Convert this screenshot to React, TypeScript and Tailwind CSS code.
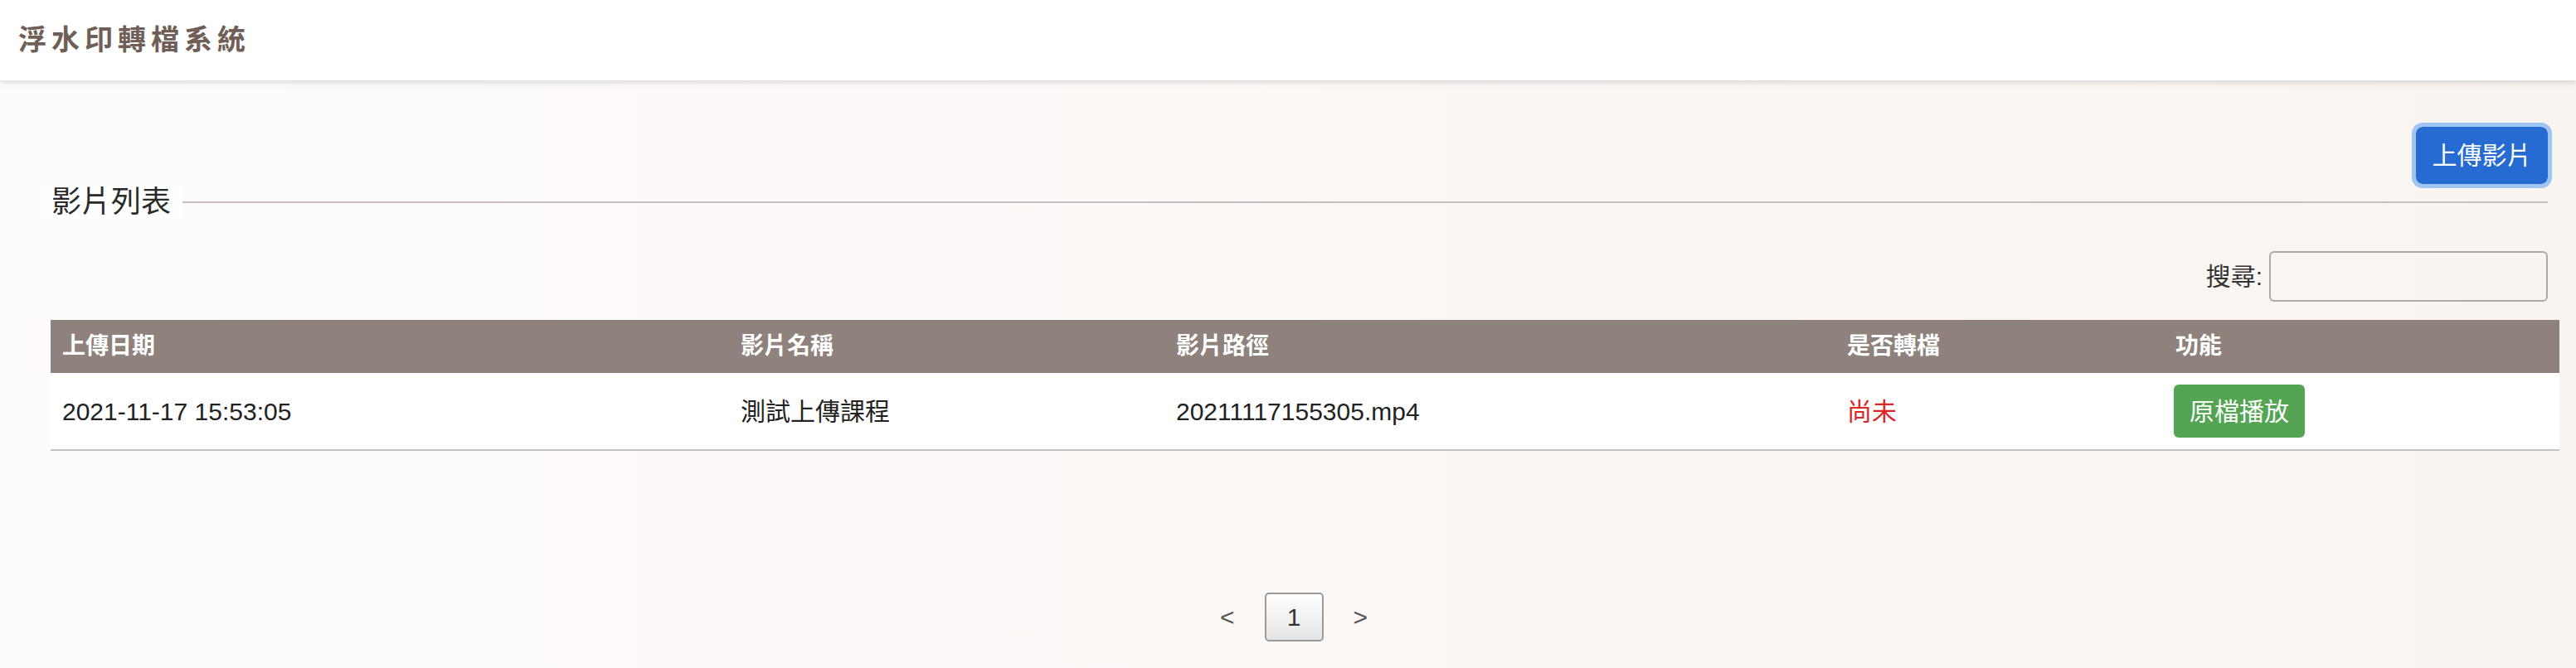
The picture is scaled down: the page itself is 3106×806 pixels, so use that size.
const rows = [
  {
    date: '2021-11-17 15:53:05',
    name: '測試上傳課程',
    path: '20211117155305.mp4',
    converted: false,
  },
];

export default function App() {
  return (
    <div className="min-h-[806px] w-full bg-gradient-to-r from-[#fdfbfb] via-[#fcf8f6] to-[#faf4f0] font-['Liberation_Sans','Noto_Sans_CJK_TC',sans-serif]">
      <header className="relative z-10 flex h-[97px] items-center bg-white pl-[22px] shadow-[0_3px_6px_rgba(0,0,0,0.12)]">
        <h1 className="text-[34px] font-bold tracking-[6px] text-[#6f5f57]">浮水印轉檔系統</h1>
      </header>

      <main className="pl-[61px] pr-[20px] pt-[56px]">
        <div className="flex justify-end pr-[14px]">
          <button className="h-[69px] w-[159px] rounded-[8px] bg-[#266bd1] text-[30px] text-white outline outline-[5px] outline-[#9fc6f3]">
            上傳影片
          </button>
        </div>

        <div className="flex h-[44px] items-center pr-[14px]">
          <h2 className="-ml-[13px] bg-[#fefefe] px-[14px] text-[36px] leading-[44px] text-[#2a2a2a]">影片列表</h2>
          <div className="h-[2px] flex-1 bg-[#c8c0c0]" />
        </div>

        <div className="mt-[37px] flex items-center justify-end gap-[8px] pr-[14px]">
          <label className="text-[30px] text-[#333]">搜尋:</label>
          <input className="h-[61px] w-[336px] rounded-[6px] border-2 border-[#aaa] bg-transparent" />
        </div>

        <table className="mt-[22px] w-full table-fixed border-collapse text-left">
          <colgroup>
            <col className="w-[818px]" />
            <col className="w-[525px]" />
            <col className="w-[809px]" />
            <col className="w-[396px]" />
            <col />
          </colgroup>
          <thead>
            <tr className="h-[64px] bg-[#8f827d] text-[28px] font-bold text-white">
              <th className="px-[14px]">上傳日期</th>
              <th className="px-[14px]">影片名稱</th>
              <th className="px-[14px]">影片路徑</th>
              <th className="px-[14px]">是否轉檔</th>
              <th className="px-[14px]">功能</th>
            </tr>
          </thead>
          <tbody>
            {rows.map((r) => (
              <tr key={r.path} className="h-[93px] border-b-2 border-[#c8c2c2] bg-white text-[30px] text-[#222]">
                <td className="px-[14px]">{r.date}</td>
                <td className="px-[14px]">{r.name}</td>
                <td className="px-[14px]">{r.path}</td>
                <td className="px-[14px] text-[#e02424]">{r.converted ? '已轉' : '尚未'}</td>
                <td className="px-[12px]">
                  <button className="h-[64px] w-[158px] rounded-[6px] bg-[#53a453] text-[30px] text-white">原檔播放</button>
                </td>
              </tr>
            ))}
          </tbody>
        </table>
      </main>

      <nav className="mt-[171px] flex items-center justify-center gap-[36px] pl-[14px] text-[30px]">
        <button className="text-[#555]">&lt;</button>
        <button className="h-[59px] w-[71px] rounded-[5px] border-2 border-[#9a9a9a] bg-gradient-to-b from-white to-[#e4e4e4] text-[#333]">
          1
        </button>
        <button className="text-[#555]">&gt;</button>
      </nav>
    </div>
  );
}
